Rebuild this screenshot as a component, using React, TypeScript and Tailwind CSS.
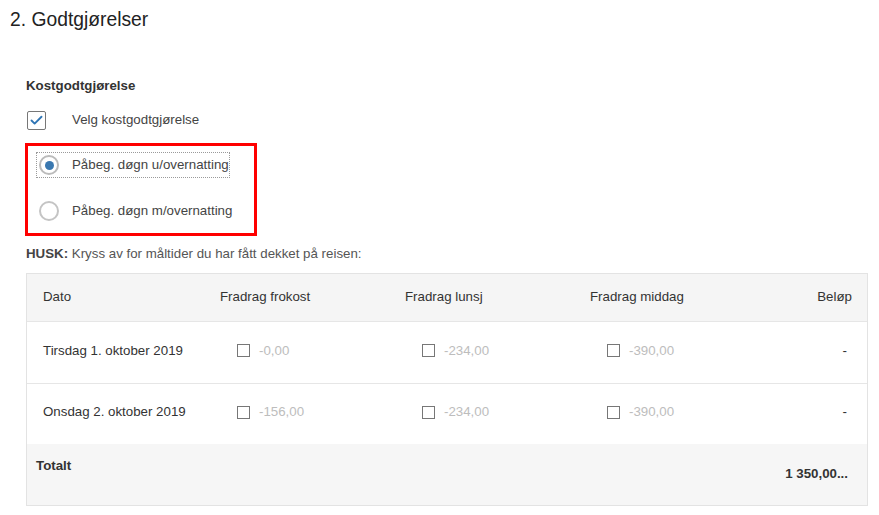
import { Check } from 'lucide-react';

const rows = [
  { date: 'Tirsdag 1. oktober 2019', frokost: '-0,00', lunsj: '-234,00', middag: '-390,00', h: 'h-[62px] pb-[4px] border-b border-[#e6e6e6]' },
  { date: 'Onsdag 2. oktober 2019', frokost: '-156,00', lunsj: '-234,00', middag: '-390,00', h: 'h-[60px] pb-[4px]' },
];

function SmallBox({ value }: { value: string }) {
  return (
    <div className="flex items-center pl-[33px]">
      <span className="w-[13px] h-[13px] border border-[#777] bg-white" />
      <span className="ml-[9px] text-[#bdbdbd]">{value}</span>
    </div>
  );
}

export default function App() {
  return (
    <div className="w-[879px] h-[515px] bg-white text-[#333] overflow-hidden" style={{ fontFamily: '"Liberation Sans", Arial, sans-serif' }}>
      <h1 className="pt-[8px] pl-[10px] text-[19.3px] leading-[24px] text-[#222]">2. Godtgjørelser</h1>

      <div className="px-[26px]">
        <div className="mt-[46px] text-[13.3px] leading-[16px] font-bold text-[#333]">Kostgodtgjørelse</div>

        {/* Velg kostgodtgjørelse */}
        <label className="mt-[16px] flex items-center h-[20px]">
          <span className="ml-[1px] w-[19px] h-[19px] border border-[#777] rounded-[2px] flex items-center justify-center bg-white">
            <Check className="w-[15px] h-[15px] text-[#2f75b5]" strokeWidth={3} />
          </span>
          <span className="ml-[26px] text-[13.3px] text-[#444]">Velg kostgodtgjørelse</span>
        </label>

        {/* Radio group */}
        <div className="mt-[13px] -ml-[1px] w-[232px] border-[3px] border-[#ff0000] pt-[7px] pb-[10px] pl-[9px]">
          <label className="flex items-center h-[24px] w-[192px] outline outline-1 outline-dotted outline-[#9a9a9a]">
            <span className="ml-[2px] w-[20px] h-[20px] rounded-full border-2 border-[#bbb] flex items-center justify-center bg-white">
              <span className="w-[9px] h-[9px] rounded-full bg-[#3a78b0]" />
            </span>
            <span className="ml-[13px] text-[13.3px] text-[#444]">Påbeg. døgn u/overnatting</span>
          </label>
          <label className="mt-[22px] flex items-center h-[24px]">
            <span className="ml-[2px] w-[20px] h-[20px] rounded-full border-2 border-[#c4c4c4] bg-white" />
            <span className="ml-[13px] text-[13.3px] text-[#444]">Påbeg. døgn m/overnatting</span>
          </label>
        </div>

        <div className="mt-[10px] text-[13.3px] leading-[16px] text-[#555]">
          <span className="font-bold text-[#444]">HUSK:</span> Kryss av for måltider du har fått dekket på reisen:
        </div>

        {/* Table */}
        <div className="mt-[11px] w-[842px] border border-[#e3e3e3] text-[13.3px]">
          <div className="grid grid-cols-[177px_185px_185px_1fr_auto] items-center h-[48px] pb-[1px] bg-[#f5f5f5] border-b border-[#e6e6e6]">
            <div className="pl-[16px]">Dato</div>
            <div className="pl-[16px]">Fradrag frokost</div>
            <div className="pl-[16px]">Fradrag lunsj</div>
            <div className="pl-[16px]">Fradrag middag</div>
            <div className="pr-[15px] text-right">Beløp</div>
          </div>
          {rows.map((r) => (
            <div key={r.date} className={`grid grid-cols-[177px_185px_185px_1fr_auto] items-center ${r.h}`}>
              <div className="pl-[16px]">{r.date}</div>
              <SmallBox value={r.frokost} />
              <SmallBox value={r.lunsj} />
              <SmallBox value={r.middag} />
              <div className="pr-[20px] text-right text-[#333]">-</div>
            </div>
          ))}
          <div className="flex justify-between h-[61px] bg-[#f6f6f6] font-bold text-[13.3px]">
            <div className="pl-[9px] pt-[12px]">Totalt</div>
            <div className="pr-[19px] pt-[20px]">1 350,00...</div>
          </div>
        </div>
      </div>
    </div>
  );
}
